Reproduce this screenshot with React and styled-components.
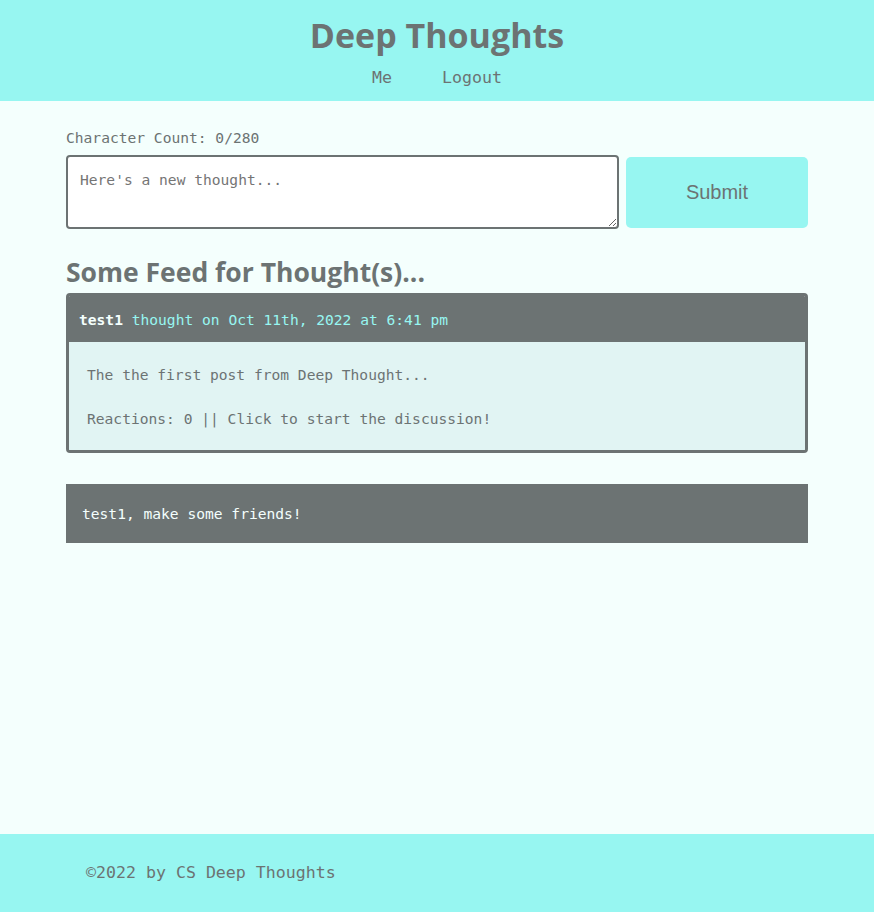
import styled, { createGlobalStyle } from 'styled-components'

const GRAY = '#6c7373'
const CYAN = '#97f6f1'
const PAGE = '#f4fffd'
const MONO = '"DejaVu Sans Mono", "Liberation Mono", monospace'
const SANS = '"Open Sans", Lato, sans-serif'

const GlobalStyle = createGlobalStyle`
  * { box-sizing: border-box; }
  body {
    margin: 0;
    background: ${PAGE};
    color: ${GRAY};
    font-family: ${MONO};
  }
`

const thoughts = [
  {
    user: 'test1',
    date: 'Oct 11th, 2022 at 6:41 pm',
    text: 'The the first post from Deep Thought...',
    reactions: 0,
  },
]

function App() {
  return (
    <>
      <GlobalStyle />
      <Page>
        <Header>
          <Title>Deep Thoughts</Title>
          <Nav>
            <NavLink>Me</NavLink>
            <NavLink>Logout</NavLink>
          </Nav>
        </Header>

        <Main>
          <Counter>Character Count: 0/280</Counter>
          <Form>
            <TextArea placeholder="Here's a new thought..." />
            <SubmitButton type="button">Submit</SubmitButton>
          </Form>

          <FeedTitle>Some Feed for Thought(s)...</FeedTitle>
          {thoughts.map((t, i) => (
            <Card key={i}>
              <CardHeader>
                <strong>{t.user}</strong> thought on {t.date}
              </CardHeader>
              <CardBody>
                <p>{t.text}</p>
                <p>Reactions: {t.reactions} || Click to start the discussion!</p>
              </CardBody>
            </Card>
          ))}

          <Friends>test1, make some friends!</Friends>
        </Main>

        <Footer>©2022 by CS Deep Thoughts</Footer>
      </Page>
    </>
  )
}

const Page = styled.div`
  display: flex;
  flex-direction: column;
  min-height: 100vh;
`

const Header = styled.header`
  background: ${CYAN};
  padding: 12px 0 13px;
  display: flex;
  flex-direction: column;
  align-items: center;
`

const Title = styled.h1`
  margin: 0;
  font-family: ${SANS};
  font-weight: 700;
  font-size: 34px;
  line-height: 46px;
  color: ${GRAY};
`

const Nav = styled.nav`
  display: flex;
  gap: 50px;
  margin-top: 10px;
`

const NavLink = styled.a`
  font-family: ${MONO};
  font-size: 16.6px;
  line-height: 20px;
  color: ${GRAY};
  cursor: pointer;
`

const Main = styled.main`
  flex: 1;
  padding: 28px 66px 40px;
`

const Counter = styled.p`
  margin: 0 0 8px;
  font-size: 14.6px;
  line-height: 18px;
`

const Form = styled.div`
  display: flex;
  align-items: center;
  gap: 7px;
`

const TextArea = styled.textarea`
  flex: 0 0 553px;
  height: 74px;
  border: 2px solid ${GRAY};
  border-radius: 4px;
  padding: 14px 12px;
  font-family: ${MONO};
  font-size: 14.6px;
  color: ${GRAY};
  background: #fff;
  &::placeholder { color: #757575; }
`

const SubmitButton = styled.button`
  flex: 1;
  height: 71px;
  border: none;
  border-radius: 5px;
  background: ${CYAN};
  color: ${GRAY};
  font-family: "Liberation Sans", Arial, sans-serif;
  font-size: 20px;
`

const FeedTitle = styled.h2`
  margin: 27px 0 5px;
  font-family: ${SANS};
  font-weight: 700;
  font-size: 26.5px;
  line-height: 32px;
  color: ${GRAY};
`

const Card = styled.div`
  border: 3px solid ${GRAY};
  border-radius: 4px;
  overflow: hidden;
`

const CardHeader = styled.div`
  background: ${GRAY};
  color: ${CYAN};
  padding: 13px 10px 12px;
  font-size: 14.6px;
  line-height: 21px;
  strong { color: ${PAGE}; }
`

const CardBody = styled.div`
  background: #e1f4f3;
  padding: 24px 18px 22px;
  p {
    margin: 0 0 26px;
    font-size: 14.6px;
    line-height: 18px;
  }
  p:last-child { margin-bottom: 0; }
`

const Friends = styled.div`
  margin-top: 31px;
  background: ${GRAY};
  color: ${PAGE};
  padding: 20px 16px;
  font-size: 14.6px;
  line-height: 19px;
`

const Footer = styled.footer`
  background: ${CYAN};
  padding: 29px 86px 29px;
  font-size: 16.6px;
  line-height: 20px;
  color: ${GRAY};
`

export default App
